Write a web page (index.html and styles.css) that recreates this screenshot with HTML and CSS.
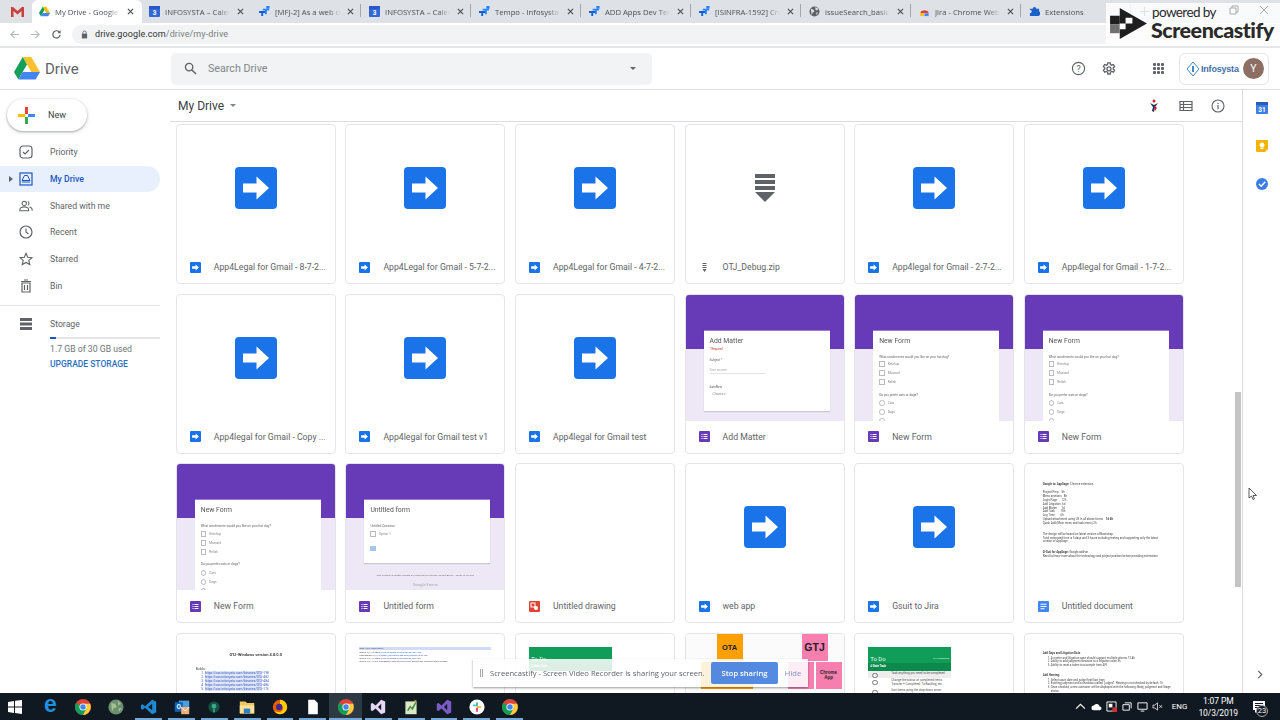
FILE: index.html
```html
<!DOCTYPE html>
<html lang="en">
<head>
<meta charset="utf-8">
<title>My Drive - Google Drive</title>
<link rel="stylesheet" href="styles.css">
</head>
<body>
<svg class="defs" width="0" height="0" aria-hidden="true">
  <defs>
    <symbol id="tile" viewBox="0 0 42 42"><rect width="42" height="42" rx="4" fill="#1a73e8"/><path d="M4.500 16.500H18V9.500L30.500 21 18 32.500V25.500H4.500Z" transform="translate(3.500 0)" fill="#fff"/></symbol>
    <symbol id="form" viewBox="0 0 11 11"><rect width="11" height="11" rx="1" fill="#673ab7"/><path d="M2.500 3h1v1h-1zM2.500 5h1v1h-1zM2.500 7h1v1h-1zM4.500 3h4v1h-4zM4.500 5h4v1h-4zM4.500 7h4v1h-4z" fill="#fff"/></symbol>
    <symbol id="doc" viewBox="0 0 11 11"><rect width="11" height="11" rx="1" fill="#4285f4"/><path d="M2.500 2.800h6v1h-6zM2.500 5h6v1h-6zM2.500 7.200h4v1h-4z" fill="#fff"/></symbol>
    <symbol id="drawing" viewBox="0 0 11 11"><rect width="11" height="11" rx="1" fill="#db4437"/><rect x="2" y="2" width="4" height="4" fill="none" stroke="#fff"/><circle cx="7" cy="7" r="2" fill="#fff"/></symbol>
    <symbol id="jira" viewBox="0 0 12 12"><path d="M0 5.500h7v2H4.500V11H2.500V7.500H0z" fill="#0b5fd8"/><path d="M4 3h7v2H8.500v4H6.500V5H4z" fill="#2684ff"/><path d="M8 0h3.500v3H8z" fill="#2684ff"/></symbol>
    <symbol id="cal" viewBox="0 0 12 12"><rect width="12" height="12" rx="1" fill="#3367d6"/><rect width="12" height="3" fill="#2a56c6"/><text x="6" y="10" font-size="7" font-family="Roboto" font-weight="700" fill="#fff" text-anchor="middle">3</text></symbol>
    <symbol id="x" viewBox="0 0 8 8"><path d="M1 1l6 6M7 1l-6 6" stroke="#45494d" stroke-width="1.200" fill="none"/></symbol>
    <symbol id="chrome" viewBox="0 0 20 20"><circle cx="10" cy="10" r="10" fill="#db4437"/><path d="M10 10L1.300 5A10 10 0 0 0 10 20l5-8z" fill="#0f9d58"/><path d="M10 6h8.900A10 10 0 0 1 10 20l4.500-8z" fill="#ffcd40"/><circle cx="10" cy="10" r="4.500" fill="#fff"/><circle cx="10" cy="10" r="3.400" fill="#4285f4"/></symbol>
    <symbol id="vsc" viewBox="0 0 20 20"><path d="M14 1l5 2.500v13L14 19 5 11l-3 2.500L0 12.500V7.500L2 6.500l3 2.500z" fill="#1f8ad2"/><path d="M14 6l-5 4 5 4z" fill="#101922"/></symbol>
  </defs>
</svg>
<div class="app">
  <div class="tabs">
    <div class="tab-gmail"><svg width="13" height="10" viewBox="0 0 13 10"><path d="M0 0h2l4.500 4L11 0h2v10h-2.500V4L6.500 7.500 2.500 4v6H0z" fill="#c9413a"/></svg></div>
    <div class="tab active">
      <svg class="fav" viewBox="0 0 26 23"><path d="M8.700 0h8.600L26 15h-8.700z" fill="#fbbc04"/><path d="M8.700 0L13 7.500 4.300 22.500 0 15z" fill="#0f9d58"/><path d="M8.700 15H26l-4.300 7.500H4.300z" fill="#4285f4"/></svg>
      <span class="tab-title">My Drive - Google</span><svg class="tab-x"><use href="#x"/></svg>
    </div>
    <div class="tab"><svg class="fav"><use href="#cal"/></svg><span class="tab-title">INFOSYSTA – Calen</span><svg class="tab-x"><use href="#x"/></svg></div>
    <div class="tab sep"><svg class="fav"><use href="#jira"/></svg><span class="tab-title">[MFJ-2] As a web d</span><svg class="tab-x"><use href="#x"/></svg></div>
    <div class="tab sep"><svg class="fav"><use href="#cal"/></svg><span class="tab-title">INFOSYSTA – Calen</span><svg class="tab-x"><use href="#x"/></svg></div>
    <div class="tab sep"><svg class="fav"><use href="#jira"/></svg><span class="tab-title">Tempo - Infosysta .</span><svg class="tab-x"><use href="#x"/></svg></div>
    <div class="tab sep"><svg class="fav"><use href="#jira"/></svg><span class="tab-title">ADD Apps Dev Tea</span><svg class="tab-x"><use href="#x"/></svg></div>
    <div class="tab sep"><svg class="fav"><use href="#jira"/></svg><span class="tab-title">[ISINFRA-1592] Cre</span><svg class="tab-x"><use href="#x"/></svg></div>
    <div class="tab sep"><svg class="fav" viewBox="0 0 12 12"><circle cx="6" cy="6" r="5.500" fill="#5f6368"/><path d="M2 3l3 1 1 2-2 1-1 3zM7 1l3 2-1 2-2-1zM8 7l2 0-2 3z" fill="#dee1e6"/></svg><span class="tab-title">issueSearch_basic.h</span><svg class="tab-x"><use href="#x"/></svg></div>
    <div class="tab sep"><svg class="fav" viewBox="0 0 12 12"><path d="M3 4h6l1 6H2z" fill="#f1f3f4"/><path d="M1.500 8a4.500 3.500 0 0 1 9 0z" fill="#db4437"/><path d="M1.500 8h4v3h-4z" fill="#fbbc04"/><path d="M6 8h4.500v3H6z" fill="#4285f4"/></svg><span class="tab-title">Jira - Chrome Web</span><svg class="tab-x"><use href="#x"/></svg></div>
    <div class="tab sep"><svg class="fav" viewBox="0 0 12 12"><path d="M1 3h3a2 2 0 0 1 4 0h3v3a2 2 0 0 1 0 4v1H1V8a2 2 0 0 0 0-4z" fill="#1a62c9"/></svg><span class="tab-title">Extensions</span></div>
    <svg class="new-tab" viewBox="0 0 10 10"><path d="M5 0v10M0 5h10" stroke="#45494d" stroke-width="1"/></svg>
  </div>
  <div class="toolbar">
    <svg class="nav-ic" viewBox="0 0 12 12"><path d="M11 6H2M6 2L2 6l4 4" stroke="#b4b7bb" stroke-width="1.200" fill="none"/></svg>
    <svg class="nav-ic" viewBox="0 0 12 12"><path d="M1 6h9M6 2l4 4-4 4" stroke="#b4b7bb" stroke-width="1.200" fill="none"/></svg>
    <svg class="nav-ic" viewBox="0 0 12 12"><path d="M10 6.500A4 4 0 1 1 9 3.200" stroke="#5f6368" stroke-width="1.300" fill="none"/><path d="M10.500 1v3.500H7z" fill="#5f6368"/></svg>
    <div class="omnibox">
      <svg class="lock" viewBox="0 0 8 10"><path d="M1 4h6v5.500H1z" fill="#5f6368"/><path d="M2.200 4V2.800a1.800 1.800 0 0 1 3.600 0V4" stroke="#5f6368" fill="none"/></svg>
      <span class="url"><b>drive.google.com</b>/drive/my-drive</span>
    </div>
  </div>
  <header class="drive-head">
    <div class="brand">
      <svg class="brand-logo" viewBox="0 0 26 23"><path d="M8.700 0h8.600L26 15h-8.700z" fill="#fbc02d"/><path d="M8.700 0L13 7.500 4.300 22.500 0 15z" fill="#14a05a"/><path d="M8.700 15H26l-4.300 7.500H4.300z" fill="#4285f4"/></svg>
      <span class="brand-name">Drive</span>
    </div>
    <div class="search">
      <svg class="search-ic" viewBox="0 0 14 14"><circle cx="5.500" cy="5.500" r="4" stroke="#5f6368" stroke-width="1.400" fill="none"/><path d="M8.500 8.500L13 13" stroke="#5f6368" stroke-width="1.500"/></svg>
      <span class="search-text">Search Drive</span>
      <span class="caret dark"></span>
    </div>
    <div class="head-right">
      <svg class="head-ic" viewBox="0 0 16 16"><circle cx="8" cy="8" r="6.500" stroke="#5f6368" stroke-width="1.200" fill="none"/><text x="8" y="11.300" font-size="9.500" font-family="Roboto" fill="#5f6368" text-anchor="middle">?</text></svg>
      <svg class="head-ic gear" viewBox="0 0 16 16"><path d="M6.800 1h2.400l.3 1.800 1.200.6 1.700-.7 1.200 2-1.400 1.200v1.300l1.400 1.200-1.200 2-1.700-.7-1.200.7-.3 1.800H6.800l-.3-1.800-1.200-.7-1.700.7-1.200-2 1.400-1.200V5.900L2.400 4.700l1.200-2 1.700.7 1.200-.6z" stroke="#5f6368" stroke-width="1.300" fill="none" transform="translate(0 .8)"/><circle cx="8" cy="7.800" r="2" stroke="#5f6368" stroke-width="1.300" fill="none"/></svg>
      <div class="apps"><i></i><i></i><i></i><i></i><i></i><i></i><i></i><i></i><i></i></div>
      <div class="account">
        <svg width="14" height="16" viewBox="0 0 14 16"><path d="M7 1l6 7-6 7-6-7z" fill="none" stroke="#3f87c5"/><path d="M6 5h2v6H6z" fill="#3f87c5"/></svg>
        <span class="acct-name">Infosysta</span>
        <span class="avatar">Y</span>
      </div>
    </div>
  </header>
  <div class="main">
    <nav class="sidebar">
      <button class="new-btn"><svg width="17" height="17" viewBox="0 0 17 17"><path d="M7 0h3v7H7z" fill="#ea4335"/><path d="M10 7h7v3h-7z" fill="#4285f4"/><path d="M7 10h3v7H7z" fill="#34a853"/><path d="M0 7h7v3H0z" fill="#fbbc04"/></svg><span>New</span></button>
      <ul class="nav-list">
        <li class="nav-row"><svg class="nav-svg" viewBox="0 0 14 14"><rect x="1" y="1" width="12" height="12" rx="3" stroke="#5f6368" stroke-width="1.200" fill="none"/><path d="M4 7l2 2 4-4" stroke="#5f6368" stroke-width="1.100" fill="none"/></svg>Priority</li>
        <li class="nav-row current"><span class="expander"></span><svg class="nav-svg" viewBox="0 0 14 14"><rect x="1" y="1" width="12" height="12" fill="none" stroke="#1a56c4" stroke-width="1.200"/><path d="M5.500 3.500h3L11 8.500H3z" fill="none" stroke="#1a56c4"/><path d="M3 10h8" stroke="#1a56c4"/></svg>My Drive</li>
        <li class="nav-row"><svg class="nav-svg" viewBox="0 0 16 14"><circle cx="6" cy="4" r="2.500" stroke="#5f6368" stroke-width="1.200" fill="none"/><path d="M1 12.500v-1.500c0-2 3-3 5-3s5 1 5 3v1.500z" stroke="#5f6368" stroke-width="1.200" fill="none"/><path d="M10 1.800a2.500 2.500 0 0 1 0 4.500M12 8.200c2 .5 3 1.500 3 3v1.300" stroke="#5f6368" stroke-width="1.200" fill="none"/></svg>Shared with me</li>
        <li class="nav-row"><svg class="nav-svg" viewBox="0 0 14 14"><circle cx="7" cy="7" r="6" stroke="#5f6368" stroke-width="1.200" fill="none"/><path d="M7 3.500V7l2.500 2" stroke="#5f6368" stroke-width="1.100" fill="none"/></svg>Recent</li>
        <li class="nav-row"><svg class="nav-svg" viewBox="0 0 14 14"><path d="M7 1.300l1.700 3.900 4.300.4-3.200 2.800 1 4.200L7 10.400l-3.800 2.200 1-4.200L1 5.600l4.300-.4z" stroke="#5f6368" stroke-width="1.100" fill="none"/></svg>Starred</li>
        <li class="nav-row"><svg class="nav-svg" viewBox="0 0 14 14"><path d="M3 4h8v9H3zM2 2.500h10M5 1h4M5.500 6v5M8.500 6v5" stroke="#5f6368" stroke-width="1.200" fill="none"/></svg>Bin</li>
      </ul>
      <div class="storage">
        <svg class="nav-svg" viewBox="0 0 14 12"><path d="M1 0h12v3H1zM1 4.500h12v3H1zM1 9h12v3H1z" fill="#5f6368"/></svg>
        <div class="storage-info">
          <div class="storage-label">Storage</div>
          <div class="meter"><div class="meter-fill"></div></div>
          <div class="storage-used">1.7 GB of 30 GB used</div>
          <div class="upgrade">UPGRADE STORAGE</div>
        </div>
      </div>
    </nav>
    <div class="center">
      <div class="subbar">
        <span class="crumb">My Drive</span><span class="caret"></span>
        <div class="sub-right">
          <svg class="sub-ic" viewBox="0 0 12 14"><circle cx="6" cy="2" r="1.500" fill="#c62828"/><path d="M2 4l4 2 4-2-3 4-1 5-2-1 1-4z" fill="#1a2a5a"/><path d="M6 6l3 3-2 3z" fill="#c62828"/></svg>
          <svg class="sub-ic" viewBox="0 0 14 14"><path d="M1 2.500h12v9H1zM1 5.500h12M1 8.500h12M4.500 2.500v9" stroke="#5f6368" stroke-width="1.200" fill="none"/></svg>
          <svg class="sub-ic" viewBox="0 0 14 14"><circle cx="7" cy="7" r="6" stroke="#5f6368" stroke-width="1.100" fill="none"/><path d="M6.400 6h1.200v4.300H6.400zM6.400 3.700h1.200v1.200H6.400z" fill="#5f6368"/></svg>
        </div>
      </div>
      <div class="content">
        <div class="grid">
          <article class="card"><div class="thumb center-tile"><svg class="tile"><use href="#tile"/></svg></div><div class="foot"><svg class="ftype"><use href="#tile"/></svg><span class="fname">App4Legal for Gmail - 8-7-2...</span></div></article>
          <article class="card"><div class="thumb center-tile"><svg class="tile"><use href="#tile"/></svg></div><div class="foot"><svg class="ftype"><use href="#tile"/></svg><span class="fname">App4Legal for Gmail - 5-7-2...</span></div></article>
          <article class="card"><div class="thumb center-tile"><svg class="tile"><use href="#tile"/></svg></div><div class="foot"><svg class="ftype"><use href="#tile"/></svg><span class="fname">App4Legal for Gmail - 4-7-2...</span></div></article>
          <article class="card"><div class="thumb center-tile"><svg class="zip" viewBox="0 0 20 28"><path d="M0 0h20v4H0zM0 6h20v4H0zM0 12h20v4H0z" fill="#5f6368"/><path d="M0 18h20L10 28z" fill="#5f6368"/></svg></div><div class="foot"><svg class="ftype" viewBox="0 0 11 11"><path d="M3.500 1h4v1h-4zM3.500 3h4v1h-4zM3.500 5h4v1h-4zM3.500 7h4L5.500 10z" fill="#5f6368"/></svg><span class="fname">OTJ_Debug.zip</span></div></article>
          <article class="card"><div class="thumb center-tile"><svg class="tile"><use href="#tile"/></svg></div><div class="foot"><svg class="ftype"><use href="#tile"/></svg><span class="fname">App4legal for Gmail - 2-7-2...</span></div></article>
          <article class="card"><div class="thumb center-tile"><svg class="tile"><use href="#tile"/></svg></div><div class="foot"><svg class="ftype"><use href="#tile"/></svg><span class="fname">App4legal for Gmail - 1-7-2...</span></div></article>

          <article class="card"><div class="thumb center-tile"><svg class="tile"><use href="#tile"/></svg></div><div class="foot"><svg class="ftype"><use href="#tile"/></svg><span class="fname">App4legal for Gmail - Copy ...</span></div></article>
          <article class="card"><div class="thumb center-tile"><svg class="tile"><use href="#tile"/></svg></div><div class="foot"><svg class="ftype"><use href="#tile"/></svg><span class="fname">App4legal for Gmail test v1</span></div></article>
          <article class="card"><div class="thumb center-tile"><svg class="tile"><use href="#tile"/></svg></div><div class="foot"><svg class="ftype"><use href="#tile"/></svg><span class="fname">App4legal for Gmail test</span></div></article>
          <article class="card"><div class="thumb form-thumb"><div class="sheet short">
            <div class="f-title">Add Matter</div><div class="f-req">* Required</div><div class="f-q gap-m">Subject *</div><div class="f-answer">Your answer</div><div class="f-q gap-l">dateNew</div><div class="f-opt">Choose ▾</div>
          </div></div><div class="foot"><svg class="ftype"><use href="#form"/></svg><span class="fname">Add Matter</span></div></article>
          <article class="card"><div class="thumb form-thumb"><div class="sheet">
            <div class="f-title">New Form</div><div class="f-q">What condiments would you like on your hot dog?</div><div class="f-check">Ketchup</div><div class="f-check">Mustard</div><div class="f-check">Relish</div><div class="f-q gap-q">Do you prefer cats or dogs?</div><div class="f-radio">Cats</div><div class="f-radio">Dogs</div><div class="f-radio"></div>
          </div></div><div class="foot"><svg class="ftype"><use href="#form"/></svg><span class="fname">New Form</span></div></article>
          <article class="card"><div class="thumb form-thumb"><div class="sheet">
            <div class="f-title">New Form</div><div class="f-q">What condiments would you like on your hot dog?</div><div class="f-check">Ketchup</div><div class="f-check">Mustard</div><div class="f-check">Relish</div><div class="f-q gap-q">Do you prefer cats or dogs?</div><div class="f-radio">Cats</div><div class="f-radio">Dogs</div><div class="f-radio"></div>
          </div></div><div class="foot"><svg class="ftype"><use href="#form"/></svg><span class="fname">New Form</span></div></article>

          <article class="card"><div class="thumb form-thumb"><div class="sheet">
            <div class="f-title">New Form</div><div class="f-q">What condiments would you like on your hot dog?</div><div class="f-check">Ketchup</div><div class="f-check">Mustard</div><div class="f-check">Relish</div><div class="f-q gap-q">Do you prefer cats or dogs?</div><div class="f-radio">Cats</div><div class="f-radio">Dogs</div><div class="f-radio"></div>
          </div></div><div class="foot"><svg class="ftype"><use href="#form"/></svg><span class="fname">New Form</span></div></article>
          <article class="card"><div class="thumb form-thumb"><div class="sheet tiny">
            <div class="f-title">Untitled form</div><div class="f-q">Untitled Question</div><div class="f-check">Option 1</div><div class="f-upload"></div>
          </div><div class="f-legal">This content is neither created nor endorsed by Google. Report Abuse - Terms of Service</div><div class="f-brand">Google Forms</div></div><div class="foot"><svg class="ftype"><use href="#form"/></svg><span class="fname">Untitled form</span></div></article>
          <article class="card"><div class="thumb"></div><div class="foot"><svg class="ftype"><use href="#drawing"/></svg><span class="fname">Untitled drawing</span></div></article>
          <article class="card"><div class="thumb center-tile"><svg class="tile"><use href="#tile"/></svg></div><div class="foot"><svg class="ftype"><use href="#tile"/></svg><span class="fname">web app</span></div></article>
          <article class="card"><div class="thumb center-tile"><svg class="tile"><use href="#tile"/></svg></div><div class="foot"><svg class="ftype"><use href="#tile"/></svg><span class="fname">Gsuit to Jira</span></div></article>
          <article class="card"><div class="thumb doc-thumb">
            <p><b>Google to: AppSage:</b> Chrome extension</p>
            <p class="lst">Project Prep    5h<br>Menu sections   8h<br>Login Page      12h<br>Add Litigation  6d<br>Add Matter      1d<br>Add Task        10h<br>Log Time        6h<br>Upload attachment using UX in all above forms    <b>1d 4h</b><br>Quick Add (Main menu and task menu) 2h</p>
            <p class="sp">The design will be based on latest version of Bootstrap<br>Total estimated time is 5 days and 3 hours including testing and supporting only the latest<br>version of AppSage</p>
            <p class="sp"><b>G-Suit for AppSage:</b> Google add-on<br>Need to know more about the technology and project position before providing estimation</p>
          </div><div class="foot"><svg class="ftype"><use href="#doc"/></svg><span class="fname">Untitled document</span></div></article>

          <article class="card"><div class="thumb otj">
            <div class="otj-title">OTJ-Windows version 4.8.0.0</div>
            <div class="otj-label">Builds:</div>
            <ol class="otj-links"><li>https://cas.infosysta.com/binaries/OTJ-198</li><li>https://cas.infosysta.com/binaries/OTJ-482</li><li>https://cas.infosysta.com/binaries/OTJ-484</li><li>https://cas.infosysta.com/binaries/OTJ-486</li><li>https://cas.infosysta.com/binaries/OTJ-176</li></ol>
          </div></article>
          <article class="card"><div class="thumb sheet-thumb">
            <div class="tb-head">Step  Title  Description</div>
            <div class="tb-row">Builds  3/7/19  <u>https://cas.infosysta.com/binaries/OTJ-198</u></div>
            <div class="tb-row">Marketplace  3/7/19  <u>https://cas.infosysta.com/binaries/OTJ-482</u></div>
            <div class="tb-row">Builds  3/7/19  <u>https://cas.infosysta.com/binaries/OTJ-484</u></div>
            <div class="tb-row">Builds  3/7/19  Not compatible with latest version, some fixes needed before release</div>
          </div></article>
          <article class="card"><div class="thumb todo-thumb"><div class="todo"><div class="todo-head">To Do</div><div class="todo-cols"># Date Task</div></div></div></article>
          <article class="card"><div class="thumb note-canvas">
            <div class="note orange n1">OTA</div><div class="note pink n2">GTJ</div><div class="note orange n3"></div><div class="note orange n4"></div><div class="note pink n5"></div><div class="note pink n6">Chrome App</div>
          </div></article>
          <article class="card"><div class="thumb todo-thumb"><div class="todo"><div class="todo-head">To Do <small>0 % completed</small></div><div class="todo-cols"># Date Task</div><div class="todo-row first">Task anything you need to be completed</div><div class="todo-row">Change the status of completed items<br>Transfer + Completed. To Backlog, etc.</div><div class="todo-row">Sort items using the drop-down arrow<br>next to the heading name.</div></div></div></article>
          <article class="card"><div class="thumb doc-thumb low">
            <p><b>Add Days and Litigation Date</b></p>
            <ol><li>A matter and litigation case should support multiple attorns   12.4h</li><li>Ability to add judgment/decision to a litigation case    3h</li><li>Ability to reset a token to a sample from API</li></ol>
            <p class="sp"><b>Add Hearing:</b></p>
            <ol><li>Select court date and judge/first/last from</li><li>Existing judgment and a checkbox called "judged". Hearing is not checked by default.   1h</li><li>Once checked, a new container will be displayed with the following: Body, judgment and Stage status</li></ol>
          </div></article>
        </div>
        <div class="scrolltrack"><div class="scrollthumb"></div></div>
      </div>
    </div>
    <aside class="rail">
      <svg class="rail-ic" viewBox="0 0 12 12"><rect width="12" height="12" rx="1" fill="#3d7fe0"/><rect width="12" height="3" fill="#2a5cb8"/><text x="6" y="10" font-size="6.500" font-family="Roboto" font-weight="700" fill="#fff" text-anchor="middle">31</text></svg>
      <svg class="rail-ic" viewBox="0 0 12 12"><path d="M0 1a1 1 0 0 1 1-1h10a1 1 0 0 1 1 1v8l-3 3H1a1 1 0 0 1-1-1z" fill="#f5b400"/><path d="M4.500 7.500h3V9h-3zM6 2.500a2.500 2.500 0 0 1 1.500 4.500h-3A2.500 2.500 0 0 1 6 2.500z" fill="#fff"/></svg>
      <svg class="rail-ic" viewBox="0 0 12 12"><circle cx="6" cy="6" r="6" fill="#3a7de6"/><path d="M3 6l2.200 2.300L9.300 3.800" stroke="#fff" stroke-width="1.400" fill="none"/></svg>
      <svg class="rail-next" viewBox="0 0 6 10"><path d="M1 1l4 4-4 4" stroke="#5f6368" stroke-width="1.300" fill="none"/></svg>
    </aside>
  </div>
  <footer class="taskbar">
    <div class="task-win"><svg width="14" height="14" viewBox="0 0 14 14"><path d="M0 2l6-1v5.500H0zM7 .800L14 0v6.500H7zM0 7.500h6V13l-6-1zM7 7.500h7V14l-7-1z" fill="#fff"/></svg></div>
    <div class="task-items">
      <div class="task-item"><span class="edge">e</span></div>
      <div class="task-item"><svg class="tk"><use href="#chrome"/></svg></div>
      <div class="task-item"><svg class="tk" viewBox="0 0 20 20"><circle cx="10" cy="10" r="9.500" fill="#6b8f71"/><path d="M4 5l5 1 2 4-4 2-2 4zM12 2l4 4-3 2zM13 12l4-1-3 5z" fill="#a3c28c"/></svg></div>
      <div class="task-item run"><svg class="tk"><use href="#vsc"/></svg></div>
      <div class="task-item run"><svg class="tk" viewBox="0 0 20 20"><rect x="6" y="2" width="13" height="12" fill="#4a9fe0"/><rect x="1" y="4" width="10" height="12" fill="#0a64b8"/><text x="6" y="13" font-size="8" font-family="Roboto" font-weight="700" fill="#fff" text-anchor="middle">O</text><rect x="9" y="10" width="10" height="9" fill="#f0b27a"/><path d="M9 10l5 5 5-5" stroke="#fff" fill="none"/></svg></div>
      <div class="task-item run"><svg class="tk" viewBox="0 0 20 20"><circle cx="10" cy="10" r="7" fill="#11513f"/><circle cx="10" cy="9" r="3" fill="#3fa58c"/><path d="M9 12h2v5H9z" fill="#3fa58c"/></svg></div>
      <div class="task-item run"><svg class="tk" viewBox="0 0 20 20"><path d="M1 3h7l2 2h9v13H1z" fill="#f2c660"/><path d="M1 8h18v10H1z" fill="#fbe29b"/><path d="M6 12h8v6H6z" fill="#2f7fc4"/></svg></div>
      <div class="task-item run"><svg class="tk" viewBox="0 0 20 20"><circle cx="10" cy="10" r="9" fill="#e66000"/><path d="M10 1a9 9 0 0 1 9 9c0 5-4 9-9 9-3 0-6-2-7-4 3 2 8 2 10-1 2-3 0-6-3-6z" fill="#ffcb00"/><circle cx="9" cy="10" r="4" fill="#45278d"/></svg></div>
      <div class="task-item run"><svg class="tk" viewBox="0 0 20 20"><path d="M4 1h8l4 4v14H4z" fill="#fff"/></svg></div>
      <div class="task-item run active"><svg class="tk"><use href="#chrome"/></svg></div>
      <div class="task-item run"><svg class="tk" viewBox="0 0 20 20"><path d="M14 1l5 2v14l-5 2L7 12l-4 3-2-1V6l2-1 4 3z" fill="#e6d8f5"/><path d="M14 6l-4 4 4 4z" fill="#101922"/></svg></div>
      <div class="task-item run"><svg class="tk" viewBox="0 0 20 20"><path d="M3 3h14v16H3z" fill="#dbe8c5"/><path d="M5 14l4-6 2 3 5-8 1 1-5 10-3-3-2 4z" fill="#3d8b40"/><path d="M14 1l3 1-1 3z" fill="#d8a435"/></svg></div>
      <div class="task-item run"><svg class="tk" viewBox="0 0 20 20"><path d="M14 1l5 2v14l-5 2L7 12l-4 3-2-1V6l2-1 4 3z" fill="#7b5cc6"/><path d="M14 6l-4 4 4 4z" fill="#101922"/></svg></div>
      <div class="task-item run"><svg class="tk" viewBox="0 0 20 20"><circle cx="10" cy="10" r="9.500" fill="#fff"/><path d="M5 9h5V7H5z" fill="#36c5f0"/><path d="M9 4h2v5H9z" fill="#2eb67d"/><path d="M10 11h5V9h-5z" fill="#ecb22e"/><path d="M9 11h2v5H9z" fill="#e01e5a"/></svg></div>
      <div class="task-item run"><svg class="tk"><use href="#chrome"/></svg></div>
    </div>
    <div class="tray">
      <svg class="tr" viewBox="0 0 10 10"><path d="M1 7l4-4 4 4" stroke="#fff" fill="none"/></svg>
      <svg class="tr" viewBox="0 0 12 10"><path d="M3 9a2.500 2.500 0 0 1 0-5 3.500 3.500 0 0 1 6.500 1 2 2 0 0 1 0 4z" fill="#fff"/></svg>
      <svg class="tr" viewBox="0 0 12 12"><path d="M1 1h10v10H1z" fill="none" stroke="#fff"/><path d="M3 3h4v4H3z" fill="#fff"/><path d="M7 7h5v5H7z" fill="#d32f2f"/></svg>
      <svg class="tr" viewBox="0 0 12 12"><path d="M1 4h7v6H1zM3 2h7v6" fill="none" stroke="#fff"/></svg>
      <svg class="tr" viewBox="0 0 12 12"><path d="M1 2h10v7H1zM4 11h4" fill="none" stroke="#fff"/></svg>
      <svg class="tr" viewBox="0 0 12 12"><path d="M1 4.500h2L6 2v8L3 7.500H1z" fill="none" stroke="#fff" stroke-width=".8"/><path d="M8 4.500l3 3M11 4.500l-3 3" stroke="#fff" stroke-width=".8"/></svg>
      <span class="lang">ENG</span>
      <div class="clock"><span>1:07 PM</span><span>10/3/2019</span></div>
      <div class="notif"><svg width="14" height="14" viewBox="0 0 14 14"><path d="M1 1h12v9H6l-3 3v-3H1z" fill="#fff"/><path d="M3 3.500h8M3 5.500h8M3 7.500h5" stroke="#101922"/></svg><span class="badge">23</span></div>
    </div>
  </footer>
  <div class="watermark">
    <svg class="wm-logo" viewBox="0 0 38 34"><path d="M10 1l28 16-28 16z" fill="#1f1f1f"/><path d="M0 9h10v9H0z" fill="#1f1f1f"/><path d="M0 18h10v9H0z" fill="#6f6f6f"/><path d="M16 11h7v6h-7zM10 17h6v6h-6z" fill="#fff"/></svg>
    <div class="wm-text"><span class="wm-small">powered by</span><span class="wm-big">Screencastify</span></div>
  </div>
  <div class="win-ctl"><svg width="10" height="10" viewBox="0 0 10 10"><path d="M1 3h6v6H1zM3 3V1h6v6H7" fill="none" stroke="#aaa"/></svg><svg width="10" height="10" viewBox="0 0 10 10"><path d="M1 1l8 8M9 1l-8 8" stroke="#aaa"/></svg></div>
  <div class="share-bar">
    <span class="grip"></span>
    <span class="share-text">Screencastify - Screen Video Recorder is sharing your screen.</span>
    <button class="stop">Stop sharing</button>
    <button class="hide">Hide</button>
  </div>
  <svg class="cursor" viewBox="0 0 10 14"><path d="M1 1v10l2.500-2 1.500 3.500 1.500-.7L5 8.500h3.500z" fill="#fff" stroke="#333" stroke-width=".8"/></svg>
</div>
</body>
</html>
```
FILE: styles.css
```css
* { box-sizing: border-box; }
html, body { margin: 0; padding: 0; height: 100%; overflow: hidden; background: #fff; }
body { font-family: Roboto, "Liberation Sans", sans-serif; color: #5f6368; }
.defs { position: absolute; }
ul, ol { margin: 0; padding: 0; list-style: none; }
p { margin: 0; }
button { font: inherit; border: 0; padding: 0; }

.app { position: relative; width: 1280px; height: 720px; display: flex; flex-direction: column; overflow: hidden; }

/* Browser tabs */
.tabs { height: 23px; flex: none; background: #dee1e6; display: flex; align-items: stretch; font-family: "Open Sans", sans-serif; font-size: 7.700px; color: #4a4e52; }
.tab-gmail { width: 32px; display: flex; align-items: center; padding-left: 11px; }
.tab { width: 110px; padding: 0 0 0 7px; display: flex; align-items: center; gap: 5px; position: relative; }
.tab.active { background: #fff; border-radius: 6px 6px 0 0; }
.tab.sep::after { content: ""; position: absolute; right: 1px; top: 4px; height: 13px; width: 1px; background: #a4a7ab; }
.fav { width: 11px; height: 11px; flex: none; }
.tab-title { flex: 1; white-space: nowrap; min-width: 0; -webkit-mask-image: linear-gradient(90deg, #000 82%, transparent 100%); mask-image: linear-gradient(90deg, #000 82%, transparent 100%); }
.tab-x { width: 7px; height: 7px; flex: none; margin-right: 8px; margin-left: 2px; }
.new-tab { width: 9px; height: 9px; align-self: center; margin-left: 8px; flex: none; }

/* Address bar */
.toolbar { height: 25px; flex: none; background: #fff; border-bottom: 2px solid #e5e6e8; display: flex; align-items: center; padding: 0 0 1px 9px; gap: 10px; }
.nav-ic { width: 11px; height: 11px; flex: none; }
.omnibox { flex: 1; height: 19px; background: #f1f3f4; border-radius: 10px 0 0 10px; display: flex; align-items: center; padding-left: 8.500px; gap: 7.500px; }
.lock { width: 7px; height: 9px; }
.url { font-size: 9px; color: #7a7e83; letter-spacing: .1px; }
.url b { font-weight: 400; color: #303134; }

/* Drive header */
.drive-head { height: 42px; flex: none; border-bottom: 1px solid #dadce0; display: flex; align-items: center; }
.brand { width: 171px; padding-left: 14px; display: flex; align-items: center; gap: 5px; }
.brand-logo { width: 26px; height: 23px; }
.brand-name { font-size: 15px; color: #5f6368; }
.search { width: 481px; height: 32px; background: #f1f3f4; border-radius: 5px; display: flex; align-items: center; padding: 0 16px 0 13px; }
.search-ic { width: 13px; height: 13px; }
.search-text { flex: 1; margin-left: 11px; font-size: 10.700px; color: #80868b; }
.head-right { flex: 1; display: flex; align-items: center; padding-right: 11px; }
.head-ic { width: 15px; height: 15px; flex: none; margin-left: 14.500px; }
.head-right .head-ic:first-child { margin-left: auto; }
.gear { width: 16px; height: 16px; }
.apps { width: 11px; height: 11px; margin-left: 36.500px; display: grid; grid-template-columns: repeat(3, 3px); gap: 1px; }
.apps i { background: #5f6368; border-radius: 1px; }
.account { width: 90px; height: 32px; margin-left: 15px; border: 1px solid #e3e5e8; border-radius: 6px; display: flex; align-items: center; padding: 0 4px 0 6px; }
.acct-name { font-family: "Liberation Sans", sans-serif; font-size: 9px; font-weight: 700; letter-spacing: -.2px; color: #3f6fa8; margin-left: 1px; flex: 1; }
.avatar { width: 21px; height: 21px; border-radius: 50%; background: #8d6e63; color: #fff; font-size: 10.500px; display: flex; align-items: center; justify-content: center; }

/* Main */
.main { flex: 1; min-height: 0; display: flex; }
.sidebar { width: 170px; flex: none; padding-top: 9px; font-size: 8.700px; }
.new-btn { width: 80px; height: 32px; margin-left: 7px; background: #fff; border-radius: 16px; box-shadow: 0 1px 2px rgba(60,64,67,.3), 0 1px 3px 1px rgba(60,64,67,.15); display: flex; align-items: center; gap: 13px; padding-left: 11px; color: #3c4043; font-size: 9px; font-weight: 400; }
.nav-list { margin-top: 8px; width: 160px; padding-bottom: 6px; border-bottom: 1px solid #e3e5e8; }
.nav-row { height: 26.670px; display: flex; align-items: center; padding-left: 19px; gap: 17px; border-radius: 0 14px 14px 0; position: relative; }
.nav-row.current { background: #e8f0fe; color: #1a56c4; font-weight: 500; }
.expander { position: absolute; left: 9px; top: 10px; border-left: 4px solid #5f6368; border-top: 3.500px solid transparent; border-bottom: 3.500px solid transparent; }
.nav-svg { width: 14px; height: 14px; flex: none; }
.storage { width: 160px; display: flex; gap: 17px; padding: 12px 0 0 19px; }
.storage > .nav-svg { height: 12px; margin-top: 0; }
.storage-info { flex: 1; }
.storage-label { line-height: 12px; }
.meter { height: 2px; margin-top: 7px; background: #e3e5e8; }
.meter-fill { width: 6px; height: 2px; background: #1a56c4; }
.storage-used { margin-top: 5px; line-height: 11px; color: #70757a; }
.upgrade { margin-top: 4px; line-height: 11px; color: #2a6fc4; font-weight: 500; font-size: 8.500px; }

.center { flex: 1; min-width: 0; display: flex; flex-direction: column; }
.subbar { height: 32px; flex: none; border-bottom: 1px solid #dadce0; display: flex; align-items: center; padding: 0 17px 0 8px; color: #3c4043; }
.crumb { font-size: 12px; }
.subbar > .caret { margin-left: 6px; }
.caret { width: 0; height: 0; border-top: 3.500px solid #80868b; border-left: 3.500px solid transparent; border-right: 3.500px solid transparent; }
.caret.dark { border-top-color: #5f6368; }
.sub-right { margin-left: auto; display: flex; gap: 18px; align-items: center; }
.sub-ic { width: 14px; height: 14px; }

.content { flex: 1; min-height: 0; display: flex; overflow: hidden; }
.grid { flex: 1; padding: 2px 0 0 5.800px; display: grid; grid-template-columns: repeat(6, 160px); grid-auto-rows: 160px; column-gap: 9.600px; row-gap: 9.650px; align-content: start; overflow: hidden; }
.scrolltrack { width: 7px; flex: none; }
.scrollthumb { width: 6px; height: 195px; margin-top: 270px; background: #c4c4c4; }

/* Cards */
.card { width: 160px; height: 160px; border: 1px solid #e3e5e8; border-radius: 4px; overflow: hidden; display: flex; flex-direction: column; background: #fff; }
.thumb { height: 126px; flex: none; position: relative; overflow: hidden; }
.center-tile { display: flex; align-items: center; justify-content: center; }
.tile { width: 42px; height: 42px; }
.zip { width: 20px; height: 28px; }
.foot { flex: 1; display: flex; align-items: center; padding: 0 4px 0 13px; gap: 13px; }
.ftype { width: 11px; height: 11px; flex: none; }
.fname { font-size: 8.700px; color: #5f6368; white-space: nowrap; }

/* Form thumbnails */
.form-thumb { background: linear-gradient(#673ab7 0, #673ab7 54px, #ede7f6 54px); filter: blur(.25px); }
.sheet { width: 126px; min-height: 100px; margin: 35px 0 0 18px; background: #fff; border-top: 1px solid #9e79d9; padding: 4px 6px 0 6px; font-size: 3.200px; color: #666; line-height: 4px; }
.sheet.short { height: 81px; min-height: 0; box-shadow: 0 1px 1px rgba(0,0,0,.15); }
.sheet.tiny { height: 64px; min-height: 0; box-shadow: 0 1px 1px rgba(0,0,0,.15); }
.f-title { font-size: 6.800px; line-height: 12px; color: #555; margin-bottom: 8px; }
.sheet.short .f-title { margin-bottom: 0; }
.f-req { color: #c0392b; font-size: 2.800px; }
.f-q { margin-bottom: 1px; }
.gap-m { margin-top: 7px; }
.gap-l { margin-top: 11px; }
.gap-q { margin-top: 6px; margin-bottom: 2px; }
.f-answer { width: 56px; color: #aaa; border-bottom: 1px solid #e3e3e3; padding-bottom: 1px; margin-top: 6px; }
.f-opt { padding-left: 3px; margin-top: 3px; color: #888; }
.f-check, .f-radio { height: 9px; display: flex; align-items: center; gap: 3px; color: #888; }
.f-check::before, .f-radio::before { content: ""; width: 3.500px; height: 3.500px; border: .5px solid #bbb; flex: none; }
.f-radio::before { border-radius: 50%; }
.f-upload { width: 6px; height: 5px; margin-top: 8px; background: #a8c7e8; }
.f-legal { font-size: 2.500px; color: #777; text-align: center; margin-top: 11px; line-height: 3px; }
.f-brand { font-size: 4px; color: #aaa; text-align: center; margin-top: 5px; line-height: 5px; }

/* Doc thumbnails */
.doc-thumb { padding: 19px 10px 0 18px; font-size: 2.900px; line-height: 3.850px; color: #444; filter: blur(.2px); }
.doc-thumb p { margin-bottom: 4px; }
.doc-thumb .lst { white-space: pre-wrap; }
.doc-thumb .sp { margin-top: 7px; }
.doc-thumb.low { padding-top: 18px; padding-left: 18px; line-height: 3.600px; }
.doc-thumb.low p { margin-bottom: 1px; }
.doc-thumb ol { padding-left: 8px; list-style: decimal; }
.otj { padding-top: 19px; font-size: 3.300px; line-height: 4px; color: #444; filter: blur(.2px); }
.otj-title { text-align: center; font-weight: 700; font-size: 4px; margin-bottom: 10px; }
.otj-label { padding-left: 19px; }
.otj-links { padding-left: 28px; color: #3b5bc0; list-style: decimal; background: linear-gradient(90deg, transparent 28px, #dfe6f7 28px, #dfe6f7 54%, transparent 54%); }
.sheet-thumb { padding: 13px 13px 0; font-size: 2.400px; line-height: 3px; color: #555; filter: blur(.2px); }
.tb-head { background: #d0dcf5; height: 3px; margin-bottom: 1px; white-space: pre; }
.tb-row { white-space: nowrap; overflow: hidden; }
.tb-row u { color: #3b5bc0; }

/* To Do thumbnails */
.todo-thumb { padding: 13px 13px 0; }
.todo { width: 83px; font-size: 3px; color: #555; line-height: 3.600px; }
.todo-head { height: 16px; background: #0f9d58; color: #e8f5ee; font-size: 6px; display: flex; justify-content: space-between; align-items: flex-end; padding: 0 2px 2px; }
.todo-head small { font-size: 2.500px; }
.todo-cols { height: 8px; background: #0b8a4c; color: #fff; padding: 2px; font-weight: 700; white-space: pre; }
.todo-row { padding: 1.500px 0 1.500px 23px; position: relative; }
.todo-row::before { content: ""; position: absolute; left: 4px; top: 2px; width: 3.500px; height: 3.500px; border: .5px solid #777; border-radius: 50%; }
.todo-row.first { background: #eee; }

/* Sticky notes canvas */
.note-canvas { background: #fbfbfb; }
.note { position: absolute; width: 26px; height: 27px; display: flex; align-items: center; justify-content: center; font-family: "Liberation Sans", sans-serif; font-weight: 700; text-align: center; color: #222; }
.orange { background: #ffa000; }
.pink { background: #f77fb0; }
.n1 { left: 31px; top: 0; font-size: 7.500px; }
.n2 { left: 116px; top: 0; font-size: 10.500px; }
.n3 { left: 15px; top: 28px; }
.n4 { left: 41px; top: 28px; }
.n5 { left: 102px; top: 28px; font-size: 3.500px; }
.n6 { left: 130px; top: 28px; font-size: 4.500px; }

/* Right rail */
.rail { width: 38px; flex: none; border-left: 1px solid #dadce0; display: flex; flex-direction: column; align-items: center; padding: 12px 0 14px 0; gap: 26px; }
.rail-ic { width: 12px; height: 12px; flex: none; }
.rail-next { width: 6px; height: 9px; margin-top: auto; margin-right: 3px; }

/* Taskbar */
.taskbar { height: 27px; flex: none; background: #101922; display: flex; align-items: center; color: #fff; }
.task-win { width: 34px; padding-left: 8px; display: flex; align-items: center; }
.task-items { display: flex; height: 27px; }
.task-item { width: 32.800px; height: 27px; display: flex; align-items: center; justify-content: center; position: relative; }
.task-item.run::after { content: ""; position: absolute; left: 3px; right: 3px; bottom: 0; height: 2px; background: #76a9d8; }
.task-item.active { background: #2d3a43; }
.task-item.active::after { left: 0; right: 0; }
.tk { width: 16px; height: 16px; }
.edge { font-family: "Liberation Sans", sans-serif; font-weight: 700; font-size: 23px; line-height: 23px; color: #1f8fe0; margin-top: -4px; }
.tray { margin-left: auto; display: flex; align-items: center; height: 27px; }
.tr { width: 11px; height: 11px; margin-right: 4.400px; }
.lang { font-size: 8px; margin: 0 11px 0 4px; }
.clock { display: flex; flex-direction: column; align-items: center; font-size: 8.500px; line-height: 12px; letter-spacing: -.1px; margin-right: 14px; }
.notif { position: relative; width: 28px; height: 22px; display: flex; align-items: center; }
.badge { position: absolute; left: 4px; bottom: 1px; width: 12px; height: 12px; border-radius: 50%; background: #101922; border: 1px solid #aaa; font-size: 7.500px; line-height: 10px; text-align: center; }

/* Overlays */
.watermark { position: absolute; left: 1106px; top: 3px; width: 174px; height: 41px; background: rgba(255,255,255,.82); display: flex; align-items: center; gap: 4px; padding-left: 4px; }
.wm-logo { width: 37px; height: 33px; flex: none; }
.wm-text { display: flex; flex-direction: column; font-family: Lato, sans-serif; color: #2a2a2a; line-height: 1; }
.wm-small { font-size: 13.500px; letter-spacing: -.6px; padding-left: 1px; }
.wm-big { font-size: 21.500px; font-weight: 900; letter-spacing: -.5px; margin-top: 1px; }
.win-ctl { position: absolute; left: 1229px; top: 5px; width: 40px; display: flex; justify-content: space-between; }
.share-bar { position: absolute; left: 473px; top: 659px; width: 335px; height: 28px; background: rgba(255,255,255,.86); box-shadow: 0 1px 2px rgba(0,0,0,.4); display: flex; align-items: center; padding-left: 7px; font-family: "Open Sans", sans-serif; font-size: 7.600px; color: #5f6368; }
.grip { width: 3px; height: 8px; border-left: 1px solid #aaa; border-right: 1px solid #aaa; flex: none; }
.share-text { margin-left: 7px; white-space: nowrap; flex: 1; }
.stop { width: 67px; height: 22px; background: rgba(66,125,224,.9); color: #fff; border-radius: 2px; font-size: 7.600px; font-weight: 600; font-family: inherit; }
.hide { width: 30px; background: none; color: #7d93c4; font-size: 7.600px; font-family: inherit; }
.cursor { position: absolute; left: 1248px; top: 487px; width: 10px; height: 14px; }
```
